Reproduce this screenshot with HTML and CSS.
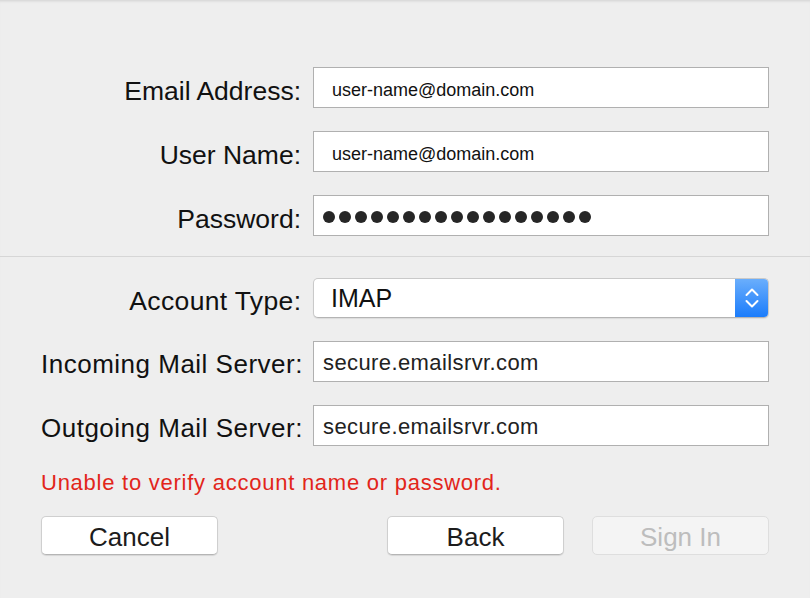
FILE: index.html
```html
<!DOCTYPE html>
<html lang="en">
<head>
<meta charset="UTF-8">
<meta name="viewport" content="width=device-width, initial-scale=1.0">
<title>Add Account</title>
<link rel="stylesheet" href="styles.css">
</head>
<body>
<div class="dialog">
  <div class="form-grid">
    <label class="label">Email Address:</label>
    <div class="field field-mono">user-name@domain.com</div>

    <label class="label">User Name:</label>
    <div class="field field-mono">user-name@domain.com</div>

    <label class="label">Password:</label>
    <div class="field field-password">
      <span class="dot"></span><span class="dot"></span><span class="dot"></span><span class="dot"></span>
      <span class="dot"></span><span class="dot"></span><span class="dot"></span><span class="dot"></span>
      <span class="dot"></span><span class="dot"></span><span class="dot"></span><span class="dot"></span>
      <span class="dot"></span><span class="dot"></span><span class="dot"></span><span class="dot"></span>
      <span class="dot"></span>
    </div>
  </div>

  <div class="divider"></div>

  <div class="form-grid">
    <label class="label label-type">Account Type:</label>
    <div class="select">
      <span class="select-value">IMAP</span>
      <span class="select-arrows">
        <svg width="16" height="22" viewBox="0 0 16 22">
          <path d="M2.5 8 L8 2.5 L13.5 8" fill="none" stroke="#fff" stroke-width="2" stroke-linecap="round" stroke-linejoin="round"/>
          <path d="M2.5 14 L8 19.5 L13.5 14" fill="none" stroke="#fff" stroke-width="2" stroke-linecap="round" stroke-linejoin="round"/>
        </svg>
      </span>
    </div>

    <label class="label label-sf">Incoming Mail Server:</label>
    <div class="field field-sf">secure.emailsrvr.com</div>

    <label class="label label-sf">Outgoing Mail Server:</label>
    <div class="field field-sf">secure.emailsrvr.com</div>
  </div>

  <p class="error-msg">Unable to verify account name or password.</p>

  <div class="buttons">
    <button type="button" class="btn">Cancel</button>
    <div class="buttons-right">
      <button type="button" class="btn">Back</button>
      <button type="button" class="btn btn-disabled" disabled>Sign In</button>
    </div>
  </div>
</div>
</body>
</html>
```

FILE: styles.css
```css
body {
  margin: 0;
  padding: 0;
  background-color: #eeeeee;
  font-family: "Liberation Sans", Arial, sans-serif;
  color: #1a1a1a;
}

.dialog {
  width: 810px;
  height: 598px;
  box-sizing: border-box;
  padding: 67px 41px 0 41px;
  box-shadow: inset 0 3px 3px -2px rgba(0, 0, 0, 0.12);
}

.form-grid {
  display: grid;
  grid-template-columns: 260px 456px;
  column-gap: 12px;
  row-gap: 23px;
  align-items: center;
}

.label {
  text-align: right;
  font-size: 26.5px;
  color: #111;
  padding-top: 7px;
  white-space: nowrap;
}

.label-type {
  letter-spacing: 0.35px;
  margin-right: -0.35px;
}

.label-sf {
  font-size: 26px;
  padding-top: 6px;
  letter-spacing: 0.5px;
  margin-right: -0.5px;
}

.field {
  height: 41px;
  box-sizing: border-box;
  background-color: #fff;
  border: 1px solid #b0b0b0;
  display: flex;
  align-items: center;
}

.field-mono {
  font-size: 18px;
  padding: 5px 0 0 18px;
  color: #111;
}

.field-password {
  padding-left: 9px;
  gap: 4px;
  padding-top: 2px;
}

.dot {
  width: 12px;
  height: 12px;
  border-radius: 50%;
  background-color: #262626;
}

.field-sf {
  font-size: 22px;
  padding: 2px 0 0 9px;
  color: #222;
  letter-spacing: 0.4px;
}

.divider {
  height: 1px;
  background-color: #d6d6d6;
  margin: 20px -41px 21px -41px;
}

.select {
  height: 40px;
  box-sizing: border-box;
  background-color: #fff;
  border: 1px solid #c9c9c9;
  border-bottom-color: #b4b4b4;
  border-radius: 5px;
  box-shadow: 0 1px 1px rgba(0, 0, 0, 0.08);
  display: flex;
  align-items: center;
  overflow: hidden;
}

.select-value {
  flex: 1;
  font-size: 25px;
  padding-left: 17px;
  color: #111;
}

.select-arrows {
  width: 33px;
  height: 100%;
  background: linear-gradient(#6aaefc, #1b7cfb);
  display: flex;
  align-items: center;
  justify-content: center;
}

.error-msg {
  margin: 23px 0 0 0;
  height: 26px;
  line-height: 26px;
  font-size: 22px;
  color: #e2251a;
  letter-spacing: 0.75px;
  padding-top: 1px;
}

.buttons {
  display: flex;
  justify-content: space-between;
  margin-top: 20px;
}

.buttons-right {
  display: flex;
  gap: 28px;
}

.btn {
  width: 177px;
  height: 39px;
  box-sizing: border-box;
  background-color: #fff;
  border: 1px solid #cfcfcf;
  border-bottom-color: #b5b5b5;
  border-radius: 5px;
  box-shadow: 0 1px 1px rgba(0, 0, 0, 0.1);
  font-family: "Liberation Sans", Arial, sans-serif;
  font-size: 26px;
  color: #1c1c1c;
  padding: 3px 0 0 0;
  cursor: pointer;
}

.btn-disabled {
  background-color: #f4f4f4;
  border-color: #dedede;
  box-shadow: none;
  color: #bdbdbd;
  cursor: default;
}
```
